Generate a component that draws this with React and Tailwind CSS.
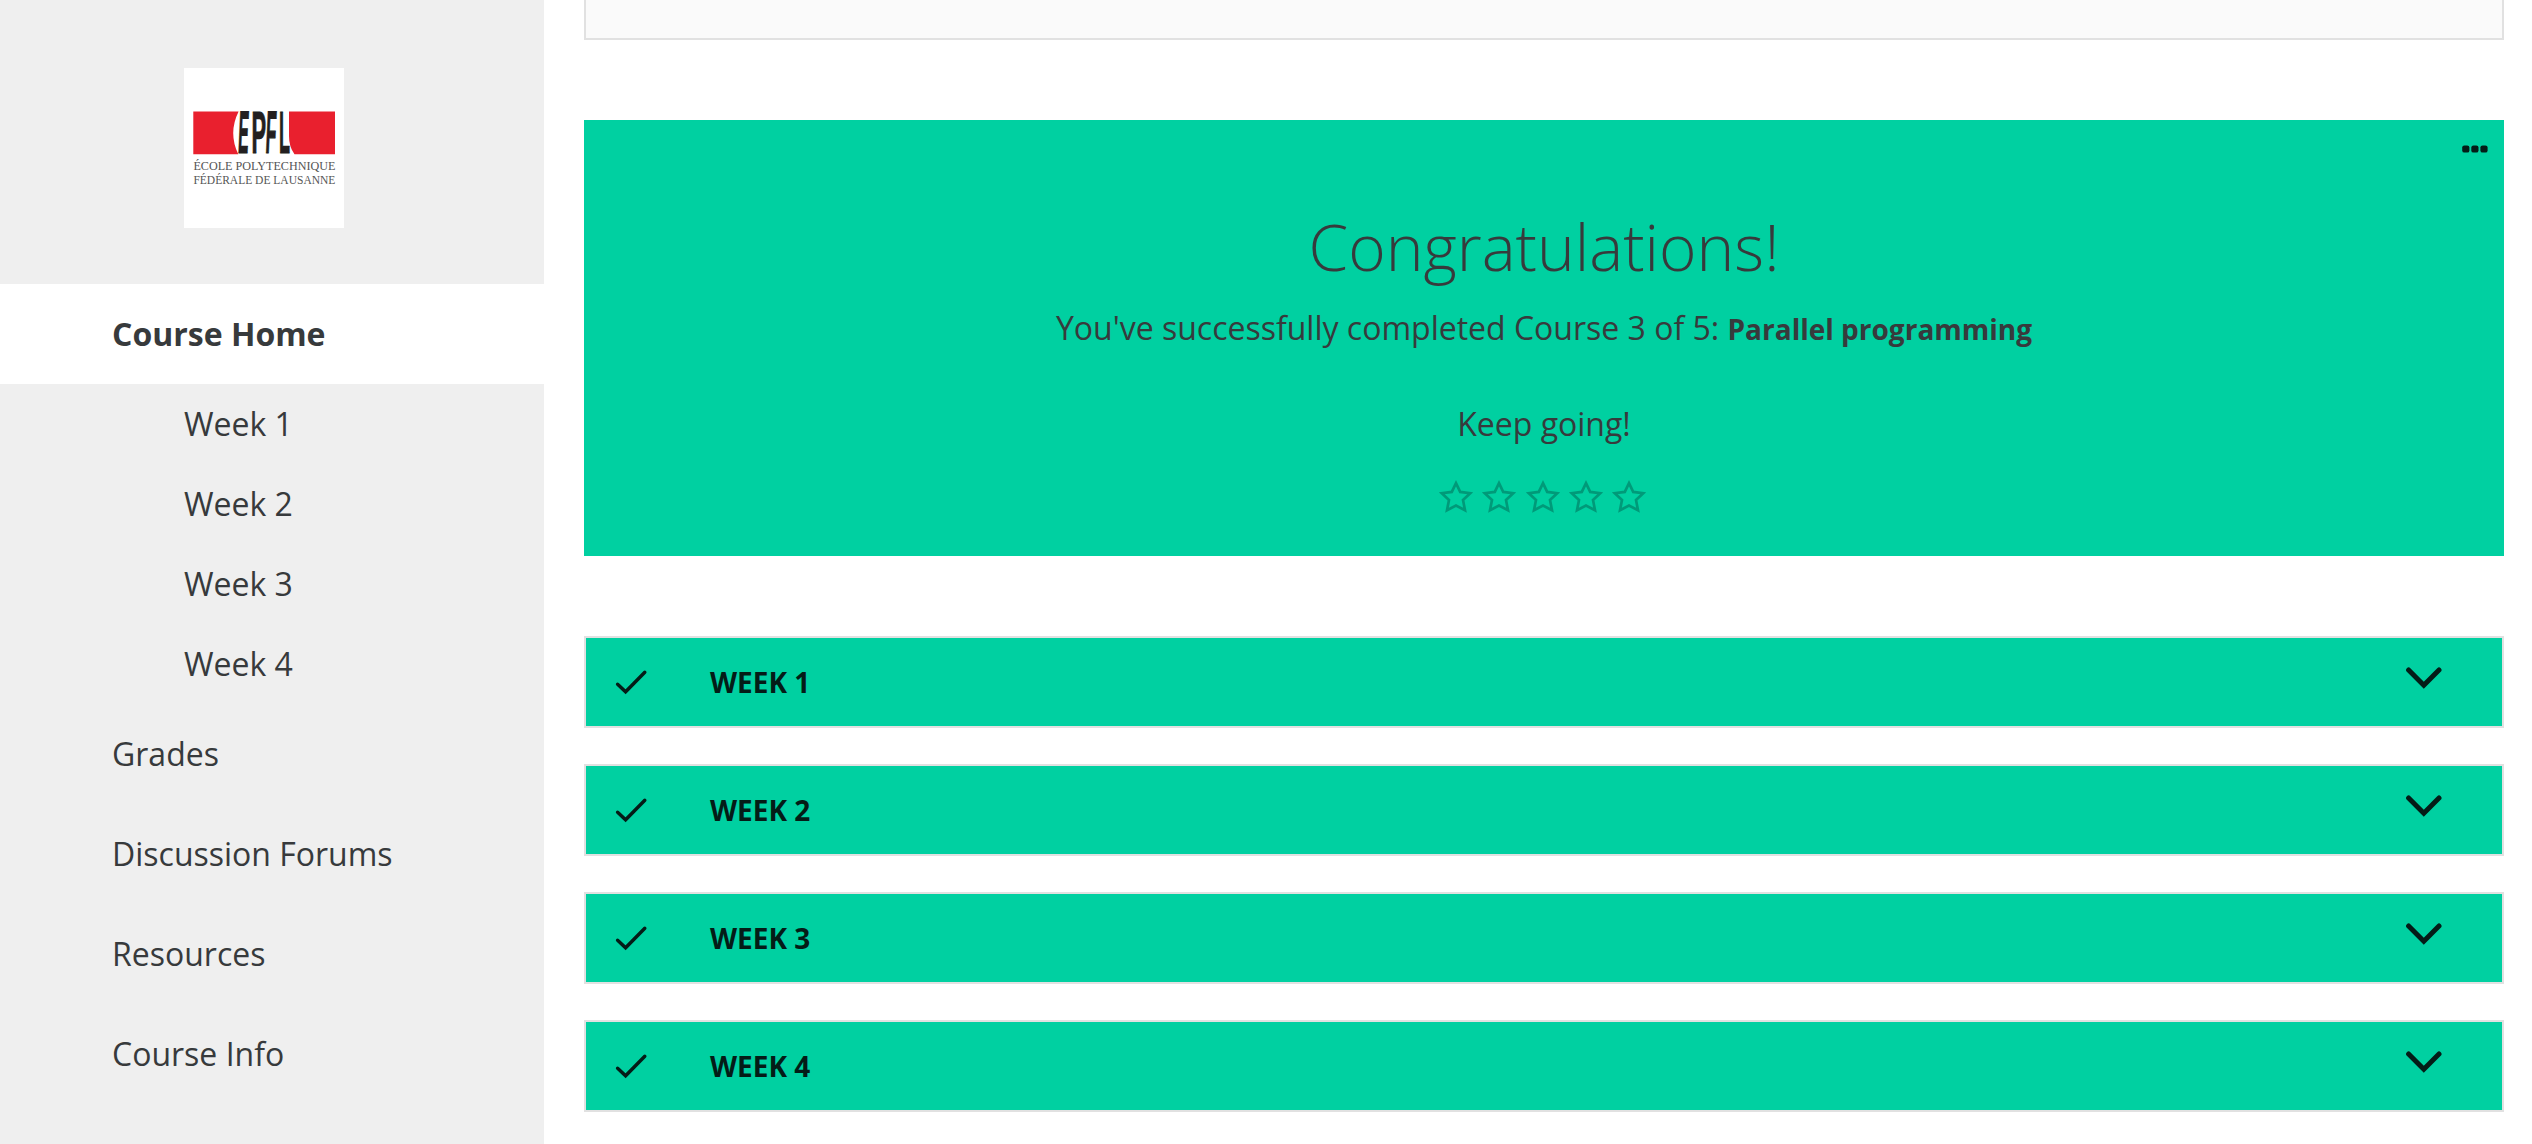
const weeks = ["Week 1", "Week 2", "Week 3", "Week 4"];
const links = ["Grades", "Discussion Forums", "Resources", "Course Info"];

function LogoLetter({ x, width, children }) {
  return (
    <text
      x={x}
      y="85.2"
      textLength={width}
      lengthAdjust="spacingAndGlyphs"
      fontSize="60"
      fill="#231f20"
      stroke="#231f20"
      strokeWidth="1.2"
      className="font-['Liberation_Sans'] font-bold"
    >
      {children}
    </text>
  );
}

function Logo() {
  return (
    <svg viewBox="0 0 160 160" className="h-40 w-40 bg-white">
      <path d="M9.3 43.5H54.6Q44 65 54.3 86.3H9.3Z" fill="#e9202e" />
      <path d="M105 43.5H151V86.3H110.5Q105 79 105 68Z" fill="#e9202e" />
      <g transform="translate(3 0) skewX(-2.5)">
        <LogoLetter x="54.2" width="10.5">E</LogoLetter>
      </g>
      <LogoLetter x="67.4" width="14.6">P</LogoLetter>
      <g transform="translate(3 0) skewX(-2.5)">
        <LogoLetter x="81.6" width="10.5">F</LogoLetter>
      </g>
      <LogoLetter x="95" width="11">L</LogoLetter>
      <g fill="#555" fontSize="13.5" className="font-['Liberation_Serif']">
        <text x="9.4" y="102.4" textLength="142" lengthAdjust="spacingAndGlyphs">ÉCOLE POLYTECHNIQUE</text>
        <text x="9.4" y="116.4" textLength="142" lengthAdjust="spacingAndGlyphs">FÉDÉRALE DE LAUSANNE</text>
      </g>
    </svg>
  );
}

function Star() {
  return (
    <svg viewBox="0 0 34 34" className="h-[34px] w-[34px]" fill="none" stroke="#009a79" strokeWidth="2.7">
      <path d="M17 4.2L21.2 12.9L31.2 14.2L24 21L26 31.2L17 26.6L8 31.2L10 21L2.8 14.2L12.8 12.9Z" />
    </svg>
  );
}

function Sidebar() {
  return (
    <aside className="w-[544px] shrink-0 bg-[#efefef]">
      <div className="flex h-[284px] pt-[68px] pl-[184px]">
        <Logo />
      </div>
      <nav>
        <a className="flex h-[100px] items-center bg-white pl-28 font-bold">Course Home</a>
        {weeks.map((week) => (
          <a key={week} className="flex h-20 items-center pl-[184px]">{week}</a>
        ))}
        {links.map((link) => (
          <a key={link} className="flex h-[100px] items-center pl-28">{link}</a>
        ))}
      </nav>
    </aside>
  );
}

function CompletionCard() {
  return (
    <section className="relative mt-20 flex h-[436px] flex-col items-center bg-[#00d0a1] pt-[83px]">
      <svg viewBox="0 0 26 8" className="absolute top-[25px] right-4 h-2 w-[26px]" fill="#041c17">
        <rect x="0.2" y="0.4" width="7.2" height="7.2" rx="2.2" />
        <rect x="9.3" y="0.4" width="7.2" height="7.2" rx="2.2" />
        <rect x="18.4" y="0.4" width="7.2" height="7.2" rx="2.2" />
      </svg>
      <h1 className="text-[64px] leading-[88px] font-light">Congratulations!</h1>
      <p className="mt-[13px] leading-[48px]">
        You've successfully completed Course 3 of 5: <b className="text-[28px]">Parallel programming</b>
      </p>
      <p className="mt-[47px] leading-[48px]">Keep going!</p>
      <div className="mt-[31px] mr-[3px] flex gap-[9.4px]">
        {[1, 2, 3, 4, 5].map((n) => <Star key={n} />)}
      </div>
    </section>
  );
}

function WeekRow({ title }) {
  return (
    <div className="flex h-[92px] items-center border-2 border-[#e1e1e1] bg-[#00d0a1] pr-[60px] pl-[29px] text-[28px] font-bold text-[#041c17] uppercase">
      <svg viewBox="0 0 34 26" className="h-[26px] w-[34px]" fill="none" stroke="currentColor" strokeWidth="3.4" strokeLinecap="round">
        <path d="M2.6 15.2L10.6 22.8L29.8 3.2" />
      </svg>
      <span className="ml-[61px]">{title}</span>
      <svg viewBox="0 0 38 24" className="mb-2 ml-auto h-6 w-[38px]" fill="none" stroke="currentColor" strokeWidth="5" strokeLinecap="round">
        <path d="M4.6 4L19.8 19.2L35 4" />
      </svg>
    </div>
  );
}

export default function App() {
  return (
    <div className="flex h-[1144px] w-[2532px] overflow-hidden bg-white font-['Open_Sans',sans-serif] text-[32px] text-[#373a3c]">
      <Sidebar />
      <main className="ml-10 w-[1920px]">
        <div className="h-10 border-2 border-t-0 border-[#e1e1e1] bg-[#fafafa]" />
        <CompletionCard />
        <div className="mt-20 flex flex-col gap-9">
          {weeks.map((week) => <WeekRow key={week} title={week} />)}
        </div>
      </main>
    </div>
  );
}
